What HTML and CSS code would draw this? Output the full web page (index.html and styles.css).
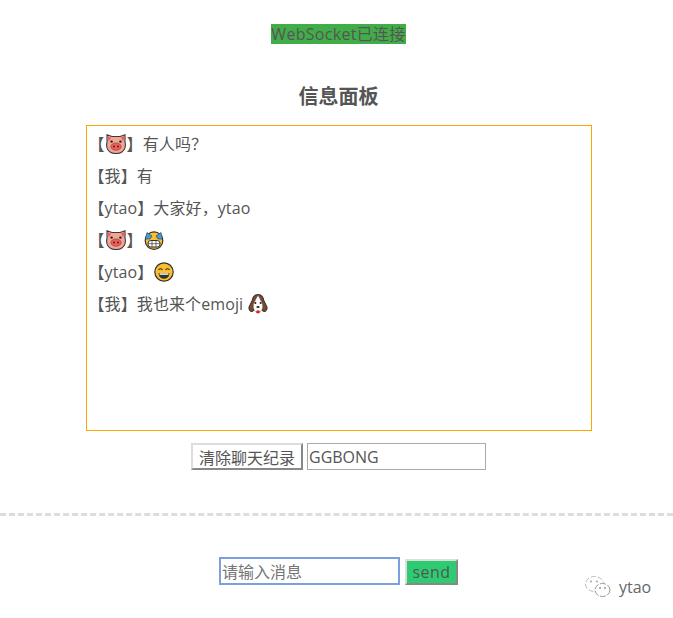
FILE: index.html
```html
<!DOCTYPE html>
<html lang="zh-CN">
<head>
    <meta charset="UTF-8">
    <meta name="viewport" content="width=device-width, initial-scale=1.0">
    <title>信息面板</title>
    <link rel="stylesheet" href="styles.css">
</head>
<body>
    <svg class="defs" width="0" height="0">
        <defs>
            <symbol id="pig" viewBox="0 0 20 20">
                <path d="M1 .8 L6 2.5 H14 L19 .8 L19 8 Q20 12 18.5 15 Q16 19.6 10 19.6 Q4 19.6 1.5 15 Q0 12 1 8 Z" fill="#f3a596" stroke="#3a3a3a" stroke-width="1.1"/>
                <path d="M1.6 2 L5 3.4 L3.6 6.5 L1.6 6 Z M18.4 2 L15 3.4 L16.4 6.5 L18.4 6 Z" fill="#e8655f"/>
                <ellipse cx="10" cy="12.6" rx="5.2" ry="3.7" fill="#ea5f5a" stroke="#8a3a3a" stroke-width=".6"/>
                <circle cx="8" cy="12.6" r="1" fill="#5a2020"/>
                <circle cx="12" cy="12.6" r="1" fill="#5a2020"/>
                <circle cx="5.6" cy="7.6" r="1.2" fill="#222"/>
                <circle cx="14.4" cy="7.6" r="1.2" fill="#222"/>
            </symbol>
            <symbol id="tears" viewBox="0 0 20 20">
                <circle cx="10" cy="10.6" r="8.8" fill="#fbc02d" stroke="#333" stroke-width="1.2"/>
                <path d="M3 2.5 L8 6 L6 9 H1.2 Z M17 2.5 L12 6 L14 9 H18.8 Z" fill="#3d9be9" stroke="#333" stroke-width=".6"/>
                <rect x="4" y="10.5" width="12" height="6.5" rx="2.8" fill="#fff" stroke="#333"/>
                <path d="M4 13.7 H16 M8 10.5 V17 M12 10.5 V17" stroke="#333" stroke-width=".7"/>
            </symbol>
            <symbol id="grin" viewBox="0 0 20 20">
                <circle cx="10" cy="10" r="9.2" fill="#fbc02d" stroke="#333" stroke-width="1.2"/>
                <path d="M4.5 8 Q6.5 5.5 8.5 8 M11.5 8 Q13.5 5.5 15.5 8" fill="none" stroke="#333" stroke-width="1.2"/>
                <path d="M4.5 11 H15.5 Q15 16.8 10 16.8 Q5 16.8 4.5 11 Z" fill="#333"/>
                <path d="M5.5 11.3 H14.5 V12.8 H5.5 Z" fill="#fff"/>
            </symbol>
            <symbol id="dog" viewBox="0 0 20 20">
                <path d="M10 .6 Q5 .6 4.4 6 L1 13 Q.6 17.5 4 17.5 Q5.5 17.5 6.5 15 H13.5 Q14.5 17.5 16 17.5 Q19.4 17.5 19 13 L15.6 6 Q15 .6 10 .6 Z" fill="#7a4a2c" stroke="#2e2e2e"/>
                <path d="M10 1.2 Q8.4 4 7 7 Q5 10 5.4 13.5 Q6.5 18.6 10 18.6 Q13.5 18.6 14.6 13.5 Q15 10 13 7 Q11.6 4 10 1.2 Z" fill="#fff" stroke="#555" stroke-width=".4"/>
                <circle cx="7.4" cy="9" r="1" fill="#222"/>
                <circle cx="12.6" cy="9" r="1" fill="#222"/>
                <ellipse cx="10" cy="13" rx="1.6" ry="1.1" fill="#222"/>
                <ellipse cx="10" cy="17.8" rx="2" ry="1.6" fill="#d8262c"/>
            </symbol>
        </defs>
    </svg>

    <div class="status"><span class="status-text">WebSocket已连接</span></div>

    <h2 class="title">信息面板</h2>

    <div class="panel">
        <p class="msg">【<svg class="emoji"><use href="#pig"/></svg>】有人吗？</p>
        <p class="msg">【我】有</p>
        <p class="msg">【ytao】大家好，ytao</p>
        <p class="msg">【<svg class="emoji"><use href="#pig"/></svg>】<svg class="emoji"><use href="#tears"/></svg></p>
        <p class="msg">【ytao】<svg class="emoji"><use href="#grin"/></svg></p>
        <p class="msg">【我】我也来个emoji <svg class="emoji"><use href="#dog"/></svg></p>
    </div>

    <div class="tools">
        <button class="clear-btn">清除聊天纪录</button>
        <input class="name-input" type="text" value="GGBONG">
    </div>

    <hr class="divider">

    <div class="send-row">
        <input class="msg-input" type="text" placeholder="请输入消息">
        <button class="send-btn">send</button>
    </div>

    <div class="watermark">
        <svg class="wechat" viewBox="0 0 28 24" width="28" height="24">
            <ellipse cx="10.5" cy="9" rx="9" ry="7.5" fill="none" stroke="#bbb" stroke-width="1" stroke-dasharray="5 2"/>
            <ellipse cx="18.5" cy="15" rx="7.5" ry="6.5" fill="#fff" stroke="#999" stroke-width="1" stroke-dasharray="6 1.5"/>
            <circle cx="7" cy="6.5" r=".9" fill="#999"/>
            <circle cx="13" cy="6.5" r=".9" fill="#999"/>
            <circle cx="16" cy="13" r=".9" fill="#888"/>
            <circle cx="21" cy="13" r=".9" fill="#888"/>
        </svg>
        <span class="watermark-text">ytao</span>
    </div>
</body>
</html>
```

FILE: styles.css
```css
body {
    font-family: "Open Sans", "Noto Sans CJK TC", sans-serif;
    font-size: 16px;
    color: #555;
    background-color: #fff;
    margin: 0;
    padding: 24px 0 0 4px;
    height: 594px;
    overflow: hidden;
    position: relative;
}

.defs {
    position: absolute;
}

.status {
    text-align: center;
    height: 20px;
    line-height: 20px;
}

.status-text {
    display: inline-block;
    background-color: #41ad49;
    letter-spacing: .3px;
}

.title {
    font-size: 20px;
    line-height: 28px;
    font-weight: bold;
    text-align: center;
    margin: 39px 0 14px;
}

.panel {
    box-sizing: border-box;
    width: 506px;
    height: 306px;
    margin: 0 auto;
    padding: 6px 2px 0;
    border: 1px solid #ffa500;
}

.msg {
    display: flex;
    align-items: center;
    height: 24px;
    line-height: 24px;
    margin: 0 0 8px;
    white-space: pre;
    letter-spacing: .1px;
}

.emoji {
    width: 20px;
    height: 20px;
    flex: none;
    margin: 0 1px;
}

.tools {
    display: flex;
    justify-content: center;
    gap: 4px;
    margin-top: 12px;
}

.clear-btn {
    box-sizing: border-box;
    width: 112px;
    height: 27px;
    padding: 0;
    font: inherit;
    color: inherit;
    background-color: #fff;
    border: 2px solid;
    border-color: #ddd #888 #888 #ddd;
}

.name-input {
    box-sizing: border-box;
    width: 179px;
    height: 27px;
    padding: 0 1px;
    font: inherit;
    color: inherit;
    border: 1px solid #aaa;
}

.divider {
    height: 0;
    margin: 43px 0 0 -4px;
    border: 0;
    border-top: 3px dashed #ddd;
}

.send-row {
    display: flex;
    justify-content: center;
    align-items: flex-end;
    gap: 5px;
    margin-top: 41px;
}

.msg-input {
    box-sizing: border-box;
    width: 181px;
    height: 28px;
    padding: 1px 1px 0;
    font: inherit;
    color: inherit;
    border: 2px solid #7b9fe0;
}

.msg-input::placeholder {
    color: #757575;
}

.send-btn {
    box-sizing: border-box;
    width: 53px;
    height: 26px;
    padding: 0;
    font: inherit;
    letter-spacing: .5px;
    color: inherit;
    background-color: #2ecc71;
    border: 2px solid;
    border-color: #ddd #888 #888 #ddd;
}

.watermark {
    position: absolute;
    left: 584px;
    top: 575px;
    display: flex;
    align-items: center;
    gap: 7px;
}

.watermark-text {
    font-size: 16px;
    color: #666;
}
```
